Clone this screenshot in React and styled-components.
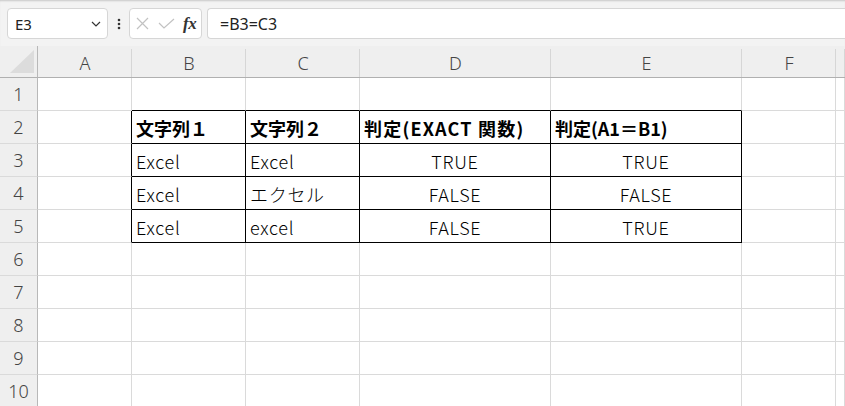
import React from 'react';
import styled, { createGlobalStyle } from 'styled-components';

const GlobalStyle = createGlobalStyle`
  html, body {
    margin: 0;
    padding: 0;
    background: #ffffff;
    overflow: hidden;
  }
  body {
    font-family: "Noto Sans CJK JP", "Noto Sans", sans-serif;
    color: #000;
  }
  * { box-sizing: border-box; }
`;

const COLUMNS = [
  { name: 'A', width: 94 },
  { name: 'B', width: 114 },
  { name: 'C', width: 114 },
  { name: 'D', width: 191 },
  { name: 'E', width: 191 },
  { name: 'F', width: 94 },
  { name: '', width: 0 },
];

// rows 2..5, columns B..E
const TABLE = {
  2: [
    { text: '文字列１', bold: true },
    { text: '文字列２', bold: true },
    { text: '判定(EXACT 関数)', bold: true, spacing: '1.2px' },
    { text: '判定(A1＝B1)', bold: true },
  ],
  3: [
    { text: 'Excel' },
    { text: 'Excel' },
    { text: 'TRUE', center: true },
    { text: 'TRUE', center: true },
  ],
  4: [
    { text: 'Excel' },
    { text: 'エクセル' },
    { text: 'FALSE', center: true },
    { text: 'FALSE', center: true },
  ],
  5: [
    { text: 'Excel' },
    { text: 'excel' },
    { text: 'FALSE', center: true },
    { text: 'TRUE', center: true },
  ],
};

const inTable = (r, c) => r >= 2 && r <= 5 && c >= 2 && c <= 5;

export default function App() {
  const rows = [1, 2, 3, 4, 5, 6, 7, 8, 9, 10];

  return (
    <Page>
      <GlobalStyle />
      <Toolbar>
        <NameBox>
          <span>E3</span>
          <svg width="10" height="6" viewBox="0 0 10 6">
            <path d="M1 1 L5 5 L9 1" fill="none" stroke="#333" strokeWidth="1.2" />
          </svg>
        </NameBox>
        <Dots>
          <svg width="4" height="12" viewBox="0 0 4 12">
            <circle cx="2" cy="2" r="1.3" fill="#333" />
            <circle cx="2" cy="6" r="1.3" fill="#333" />
            <circle cx="2" cy="10" r="1.3" fill="#333" />
          </svg>
        </Dots>
        <FxBox>
          <svg width="13" height="13" viewBox="0 0 13 13">
            <path d="M1 1 L12 12 M12 1 L1 12" stroke="#c2c2c2" strokeWidth="1.2" fill="none" />
          </svg>
          <svg width="17" height="11" viewBox="0 0 17 11">
            <path d="M1 5 L6 10 L16 1" stroke="#c2c2c2" strokeWidth="1.2" fill="none" />
          </svg>
          <FxLabel>fx</FxLabel>
        </FxBox>
        <FormulaInput>=B3=C3</FormulaInput>
      </Toolbar>

      <Sheet>
        <Corner>
          <svg width="24" height="23" viewBox="0 0 24 23">
            <polygon points="24,0 24,23 0,23" fill="#dcdcdc" />
          </svg>
        </Corner>
        {COLUMNS.map((col, i) => (
          <ColHeader key={i}>{col.name}</ColHeader>
        ))}

        {rows.map((r) => (
          <React.Fragment key={r}>
            <RowHeader>{r}</RowHeader>
            {COLUMNS.map((col, i) => {
              const c = i + 1;
              const data = inTable(r, c) ? TABLE[r][c - 2] : null;
              const right = inTable(r, c) || inTable(r, c + 1);
              const bottom = inTable(r, c) || inTable(r + 1, c);
              return (
                <Cell
                  key={c}
                  $right={right}
                  $bottom={bottom}
                  $bold={data && data.bold}
                  $center={data && data.center}
                  $spacing={data && data.spacing}
                >
                  {data ? data.text : ''}
                </Cell>
              );
            })}
          </React.Fragment>
        ))}
      </Sheet>
    </Page>
  );
}

const Page = styled.div`
  width: 845px;
  height: 406px;
  overflow: hidden;
  background: #ffffff;
`;

const Toolbar = styled.div`
  display: flex;
  align-items: flex-start;
  height: 46px;
  padding: 8px 0 0 7px;
  background: #f3f3f3;
  box-shadow: inset 0 2px 2px -1px rgba(0, 0, 0, 0.18);
`;

const NameBox = styled.div`
  display: flex;
  align-items: center;
  justify-content: space-between;
  width: 101px;
  height: 31px;
  padding: 0 6px 0 7px;
  background: #ffffff;
  border: 1px solid #d6d6d6;
  border-radius: 4px;
  font-family: "Noto Sans", "Liberation Sans", sans-serif;
  font-size: 15px;
  color: #222;
`;

const Dots = styled.div`
  display: flex;
  align-items: center;
  justify-content: center;
  width: 21px;
  height: 31px;
`;

const FxBox = styled.div`
  display: flex;
  align-items: center;
  gap: 9px;
  width: 73px;
  height: 31px;
  padding: 0 0 0 6px;
  background: #ffffff;
  border: 1px solid #d6d6d6;
  border-radius: 4px;
`;

const FxLabel = styled.span`
  font-family: "Liberation Serif", "DejaVu Serif", serif;
  font-style: italic;
  font-weight: bold;
  font-size: 17px;
  color: #333;
  margin-left: -1px;
  letter-spacing: -0.5px;
`;

const FormulaInput = styled.div`
  flex: 1;
  height: 31px;
  margin-left: 5px;
  padding-left: 12px;
  display: flex;
  align-items: center;
  background: #ffffff;
  border: 1px solid #d6d6d6;
  border-right: none;
  border-radius: 4px 0 0 4px;
  font-family: "Noto Sans", "Liberation Sans", sans-serif;
  font-size: 16px;
  color: #222;
`;

const Sheet = styled.div`
  display: grid;
  grid-template-columns: 38px ${COLUMNS.slice(0, -1).map((c) => `${c.width}px`).join(' ')} 1fr;
  grid-template-rows: 32px repeat(10, 33px);
`;

const Corner = styled.div`
  display: flex;
  justify-content: flex-end;
  align-items: flex-end;
  padding: 0 3px 4px 0;
  background: #efefef;
  border-right: 1px solid #b8b8b8;
  border-bottom: 1px solid #b0b0b0;
`;

const ColHeader = styled.div`
  position: relative;
  display: flex;
  align-items: center;
  justify-content: center;
  padding-top: 2px;
  background: #efefef;
  border-bottom: 1px solid #b0b0b0;
  font-family: "Noto Sans", "Open Sans", sans-serif;
  font-size: 18px;
  font-weight: 300;
  color: #444;

  &::after {
    content: '';
    position: absolute;
    right: 0;
    top: 3px;
    bottom: 0;
    width: 1px;
    background: #d6d6d6;
  }
`;

const RowHeader = styled.div`
  display: flex;
  align-items: center;
  justify-content: center;
  background: #efefef;
  border-right: 1px solid #b8b8b8;
  border-bottom: 1px solid #dadada;
  font-family: "Noto Sans", "Open Sans", sans-serif;
  font-size: 18px;
  font-weight: 300;
  color: #444;
`;

const Cell = styled.div`
  display: flex;
  align-items: center;
  justify-content: ${(p) => (p.$center ? 'center' : 'flex-start')};
  padding: 1px 4px 0;
  border-right: 1px solid ${(p) => (p.$right ? '#000' : '#dadada')};
  border-bottom: 1px solid ${(p) => (p.$bottom ? '#000' : '#dadada')};
  font-family: "Noto Sans CJK JP", "Noto Sans", sans-serif;
  font-size: 18px;
  font-weight: ${(p) => (p.$bold ? 700 : 300)};
  letter-spacing: ${(p) => p.$spacing || (p.$bold ? '0' : '0.7px')};
  color: #000;
  white-space: nowrap;
  overflow: hidden;
`;
